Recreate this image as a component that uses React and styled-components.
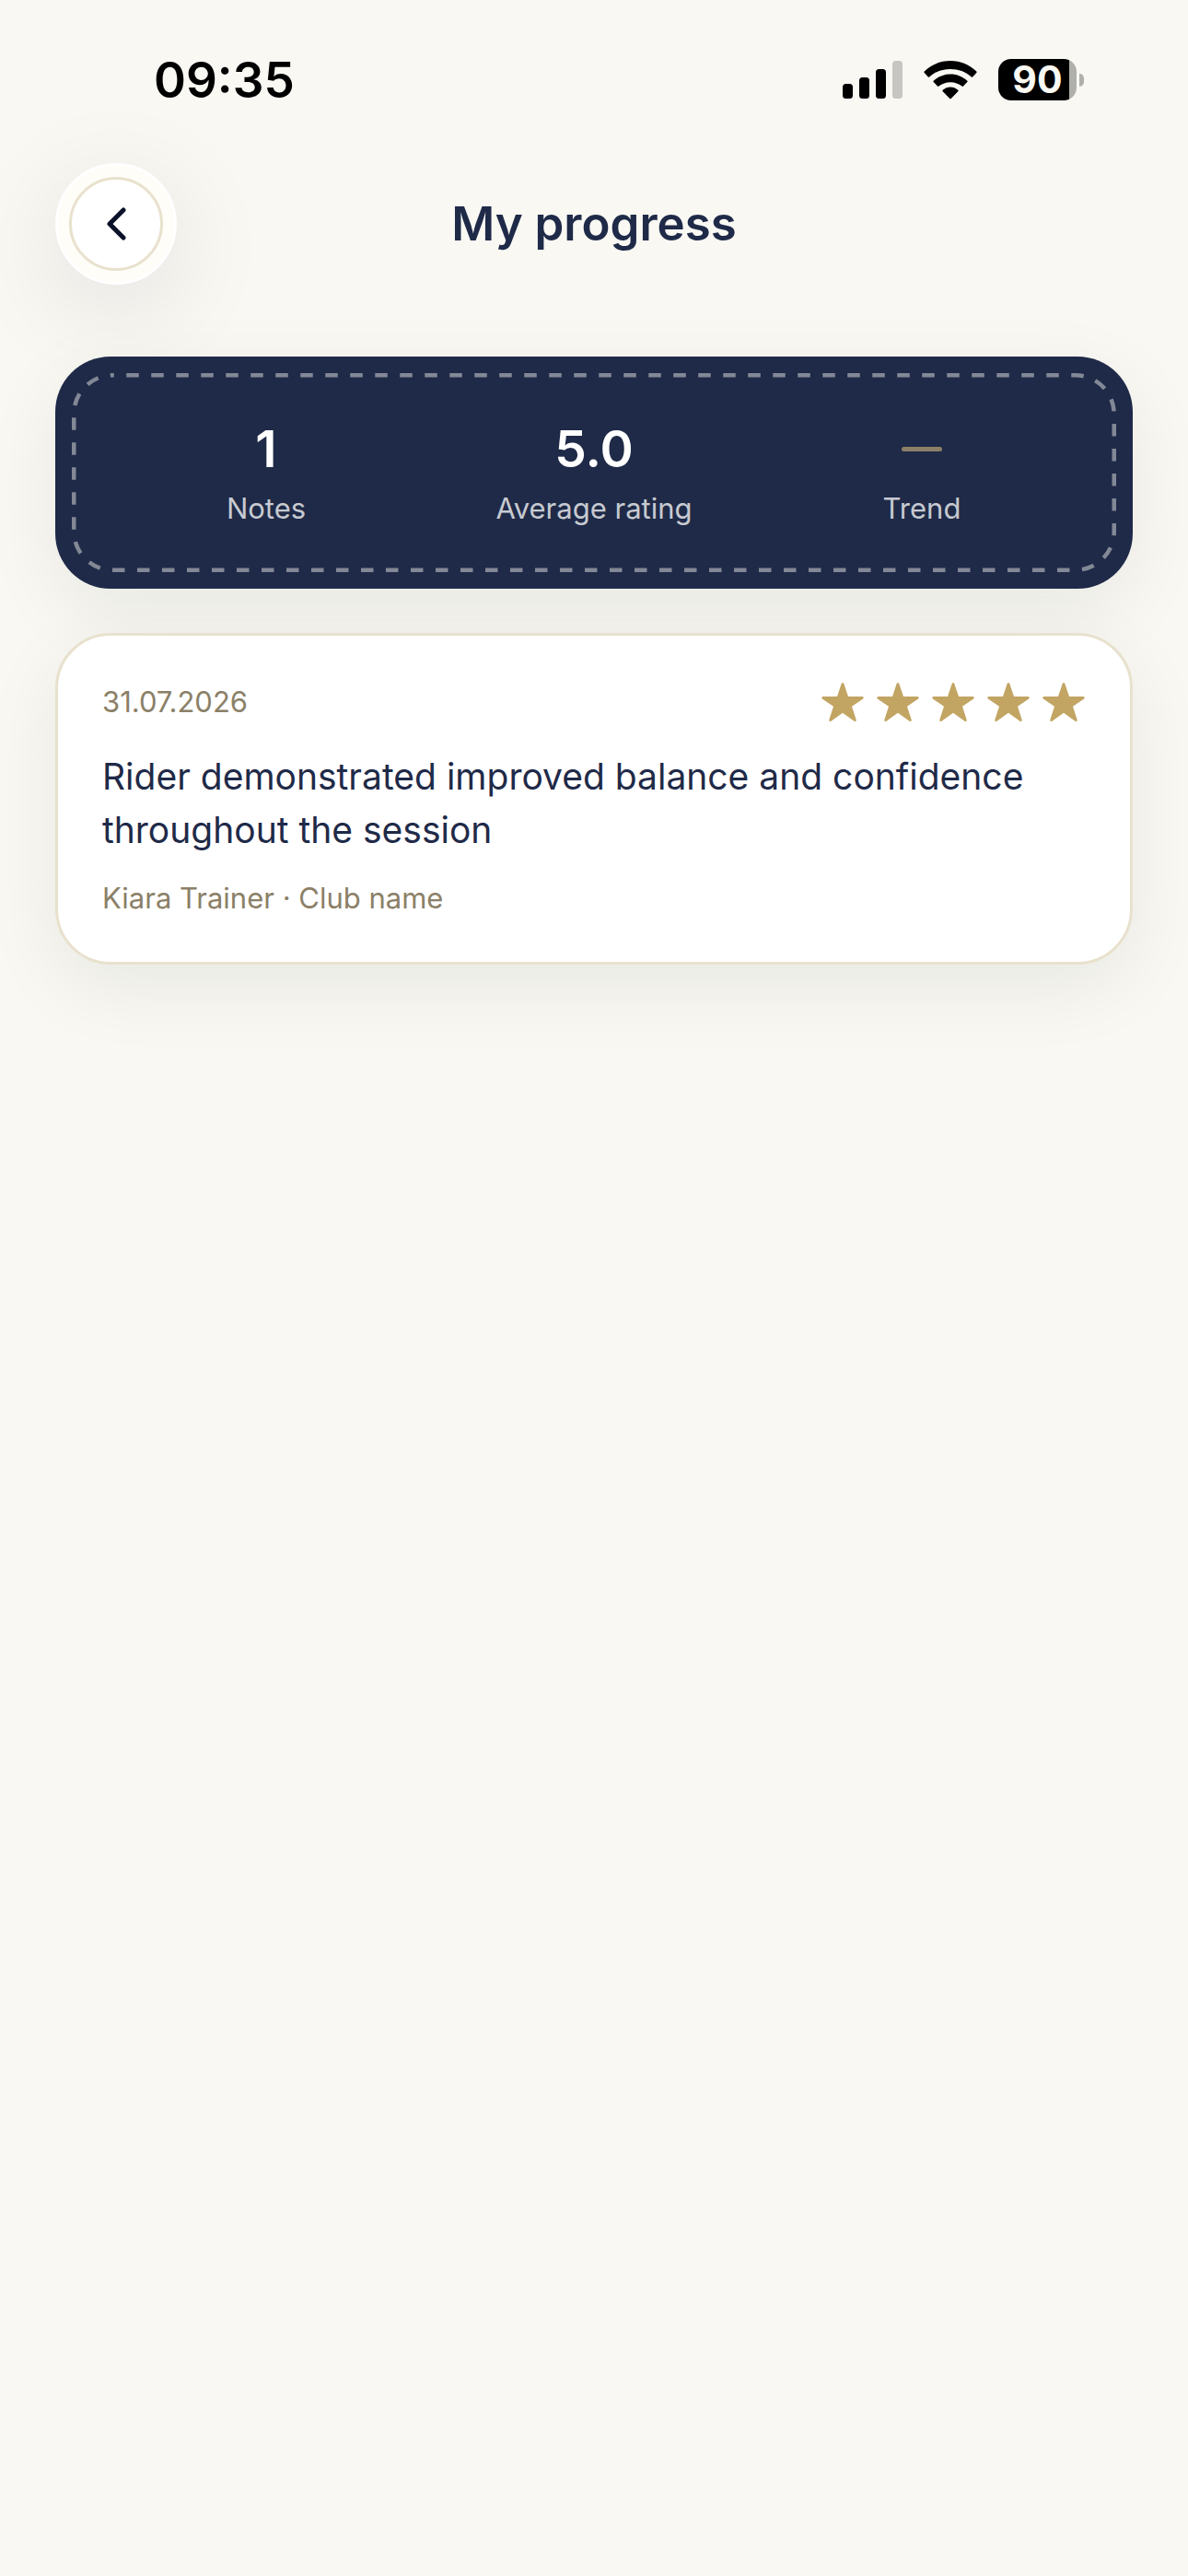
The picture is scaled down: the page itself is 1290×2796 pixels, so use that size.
import styled, { createGlobalStyle } from "styled-components";

const stats = [
    { label: "Notes", value: "1" },
    { label: "Average rating", value: "5.0" },
    { label: "Trend", value: null },
];

const notes = [
    {
        date: "31.07.2026",
        rating: 5,
        text: "Rider demonstrated improved balance and confidence throughout the session",
        author: "Kiara Trainer · Club name",
    },
];

function SignalIcon() {
    return (
        <svg width="65" height="41" viewBox="0 0 65 41" aria-hidden="true">
            <rect x="0" y="25" width="11" height="16" rx="3.5" />
            <rect x="18" y="18" width="11" height="23" rx="3.5" />
            <rect x="36" y="9" width="11" height="32" rx="3.5" />
            <rect x="54" y="0" width="11" height="41" rx="3.5" fillOpacity="0.2" />
        </svg>
    );
}

function WifiIcon() {
    return (
        <svg width="58" height="42" viewBox="0 0 58 42" aria-hidden="true">
            <path d="M29 0C40 0 50 4.300 57.300 11.500Q58 12.300 57.300 13L53.200 17.400Q52.500 18 51.800 17.400C45.500 11.800 37.500 9 29 9S12.500 11.800 6.200 17.400Q5.500 18 4.800 17.400L.7 13Q0 12.300 .7 11.500C8 4.300 18 0 29 0Z" />
            <path d="M29 14.500C36 14.500 42.500 17.200 47.300 21.700Q48 22.400 47.300 23.100L43 27.600Q42.300 28.200 41.600 27.600C38 24.800 33.800 23.200 29 23.200S20 24.800 16.400 27.600Q15.700 28.200 15 27.600L10.700 23.100Q10 22.400 10.700 21.700C15.500 17.200 22 14.500 29 14.500Z" />
            <path d="M29 28.500C32 28.500 35 29.700 37.300 31.800Q38 32.500 37.300 33.200L29.700 41Q29 41.700 28.300 41L20.700 33.200Q20 32.500 20.700 31.800C23 29.700 26 28.500 29 28.500Z" />
        </svg>
    );
}

function BackButton() {
    return (
        <BackButtonStyled type="button" aria-label="Back">
            <span>
                <svg width="24" height="40" viewBox="0 0 24 40" aria-hidden="true">
                    <path d="M20 5 5 20 20 35" />
                </svg>
            </span>
        </BackButtonStyled>
    );
}

function Star() {
    return (
        <svg width="48" height="48" viewBox="0 0 48 48" aria-hidden="true">
            <path d="M22.700 4Q24 2 25.300 4L30 18H45.500Q47.500 18.800 46.200 20.400L34 28.800L38.700 43.300Q38.800 45.700 36.900 44.900L24 35.700L11.100 44.900Q9.200 45.700 9.300 43.300L14 28.800L1.800 20.400Q.5 18.800 2.500 18H18Z" />
        </svg>
    );
}

function App() {
    return (
        <>
            <GlobalStyle />
            <StatusBar>
                <time>09:35</time>
                <div className="indicators">
                    <SignalIcon />
                    <WifiIcon />
                    <Battery>
                        <span>90</span>
                        <i />
                    </Battery>
                </div>
            </StatusBar>
            <Header>
                <BackButton />
                <h1>My progress</h1>
            </Header>
            <Main>
                <Summary>
                    <Stitching aria-hidden="true">
                        <rect x="2.25" y="2.25" rx="42" />
                    </Stitching>
                    {stats.map(({ label, value }) => (
                        <Stat key={label}>
                            <dt>{label}</dt>
                            <dd>{value ?? <NoTrend role="img" aria-label="No trend" />}</dd>
                        </Stat>
                    ))}
                </Summary>
                {notes.map(({ date, rating, text, author }) => (
                    <NoteCard key={date}>
                        <NoteHeader>
                            <Meta as="time">{date}</Meta>
                            <Rating role="img" aria-label={`${rating} out of 5`}>
                                {Array.from({ length: rating }, (_, i) => (
                                    <Star key={i} />
                                ))}
                            </Rating>
                        </NoteHeader>
                        <NoteText>{text}</NoteText>
                        <Meta>{author}</Meta>
                    </NoteCard>
                ))}
            </Main>
        </>
    );
}

const GlobalStyle = createGlobalStyle`
    * {
        box-sizing: border-box;
    }
    body {
        margin: 0;
        min-height: 100vh;
        background: #f9f8f3;
        color: #1f2a48;
        font-family: Inter, "Liberation Sans", sans-serif;
    }
    h1, p, dl, dd {
        margin: 0;
    }
`;

const StatusBar = styled.div`
    display: flex;
    justify-content: space-between;
    align-items: center;
    height: 177px;
    padding: 0 113px 4px 167px;
    color: #000;

    time {
        font-size: 53px;
        font-weight: 600;
    }
    .indicators {
        display: flex;
        align-items: center;
        gap: 23px;
    }
`;

const Battery = styled.div`
    display: flex;
    align-items: center;
    gap: 3px;

    span {
        width: 85px;
        height: 45px;
        border-radius: 14px;
        background: linear-gradient(to right, #000 77px, #afafab 77px);
        color: #f9f8f3;
        font-size: 41px;
        font-weight: 700;
        line-height: 45px;
        text-align: center;
    }
    i {
        width: 5px;
        height: 14px;
        border-radius: 0 7px 7px 0;
        background: #afafab;
    }
`;

const Header = styled.header`
    display: grid;
    grid-template-columns: 132px 1fr 132px;
    align-items: center;
    padding: 0 60px;

    h1 {
        font-size: 51px;
        font-weight: 600;
        line-height: 64px;
        text-align: center;
    }
`;

const BackButtonStyled = styled.button`
    width: 132px;
    height: 132px;
    padding: 12px;
    border: 3px solid #fff;
    border-radius: 50%;
    background: #fefdf8;
    box-shadow: 0 24px 108px rgba(20, 22, 32, 0.1);
    cursor: pointer;

    span {
        display: flex;
        justify-content: center;
        align-items: center;
        height: 102px;
        border: 3px solid #e8e1cd;
        border-radius: 50%;
        background: #fff;
    }
    path {
        fill: none;
        stroke: #0a1128;
        stroke-width: 5;
        stroke-linecap: round;
        stroke-linejoin: round;
    }
`;

const Main = styled.main`
    display: flex;
    flex-direction: column;
    gap: 48px;
    padding: 78px 60px;
`;

const Summary = styled.dl`
    position: relative;
    display: grid;
    grid-template-columns: repeat(3, 1fr);
    padding: 66px 51px;
    border-radius: 60px;
    background: #1f2a48;
    box-shadow: 0 24px 84px rgba(20, 22, 32, 0.07);
`;

const Stitching = styled.svg`
    position: absolute;
    inset: 18px;
    width: calc(100% - 36px);
    height: calc(100% - 36px);

    rect {
        width: calc(100% - 4.5px);
        height: calc(100% - 4.5px);
        fill: none;
        stroke: #838896;
        stroke-width: 4.5;
        stroke-dasharray: 13.5;
        stroke-dashoffset: 12;
    }
`;

const Stat = styled.div`
    display: flex;
    flex-direction: column-reverse;
    align-items: center;
    gap: 10px;

    dt {
        color: #c7cad1;
        font-size: 31px;
        line-height: 42px;
    }
    dd {
        display: flex;
        align-items: center;
        height: 68px;
        color: #fff;
        font-size: 55px;
        font-weight: 600;
    }
`;

const NoTrend = styled.span`
    width: 44px;
    height: 5px;
    border-radius: 3px;
    background: #8b8067;
`;

const NoteCard = styled.article`
    position: relative;
    padding: 48px;
    border: 3px solid #e8e1cd;
    border-radius: 60px;
    background: #fff;
    box-shadow: 0 24px 84px rgba(20, 22, 32, 0.07);
`;

const NoteHeader = styled.div`
    display: flex;
    justify-content: space-between;
    align-items: center;
    margin-bottom: 28px;
`;

const Rating = styled.div`
    display: flex;
    gap: 12px;
    fill: #c2a563;
`;

const Meta = styled.p`
    color: #8b8067;
    font-size: 31px;
    line-height: 42px;
`;

const NoteText = styled.p`
    margin-bottom: 24px;
    font-size: 39px;
    line-height: 58px;
`;

export default App;
